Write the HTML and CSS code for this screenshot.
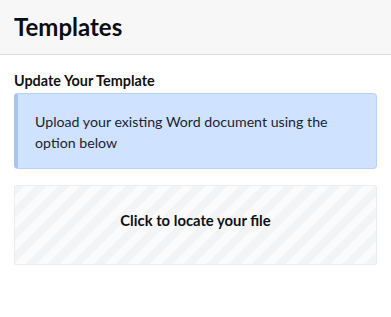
FILE: index.html
```html
<!DOCTYPE html>
<html lang="en">
  <head>
    <meta charset="UTF-8" />
    <meta name="viewport" content="width=device-width, initial-scale=1.0" />
    <title>Templates</title>
    <link rel="stylesheet" href="styles.css">
  </head>
  <body>
    <header class="page-header">
      <h1>Templates</h1>
    </header>

    <main class="content">
      <h2 class="section-title">Update Your Template</h2>
      <div class="notice">
        Upload your existing Word document using the option below
      </div>
      <label class="dropzone">
        <input type="file" class="file-input" />
        <span>Click to locate your file</span>
      </label>
    </main>
  </body>
</html>
```

FILE: styles.css
```css
body {
  margin: 0;
  font-family: Lato, "Open Sans", sans-serif;
  color: #111;
  background: #fff;
}
.page-header {
  background: #f7f7f7;
  border-bottom: 1px solid #dcdcdc;
  height: 54px;
  padding: 0 14px;
  display: flex;
  align-items: center;
}
.page-header h1 {
  margin: 0 0 2px;
  font-size: 24px;
  font-weight: 700;
  color: #0c0c14;
}
.content {
  padding: 17px 14px;
}
.section-title {
  margin: 0 0 3px;
  font-size: 14.4px;
  font-weight: 700;
  line-height: 18px;
}
.notice {
  background: #cfe2ff;
  border: 1px solid #b8d3fb;
  border-left: 4px solid #a8c4ef;
  border-radius: 4px;
  padding: 17px 16px 15px 17px;
  font-size: 14.2px;
  line-height: 21px;
  color: #1d2430;
}
.dropzone {
  margin-top: 16px;
  height: 80px;
  box-sizing: border-box;
  padding-bottom: 10px;
  border: 1px solid #ececec;
  border-radius: 2px;
  display: flex;
  align-items: center;
  justify-content: center;
  font-size: 14.8px;
  font-weight: 700;
  cursor: pointer;
  background: repeating-linear-gradient(
    -45deg,
    #f3f4f6 0,
    #f3f4f6 8px,
    #fbfbfc 8px,
    #fbfbfc 16px
  );
}
.file-input {
  display: none;
}
```
